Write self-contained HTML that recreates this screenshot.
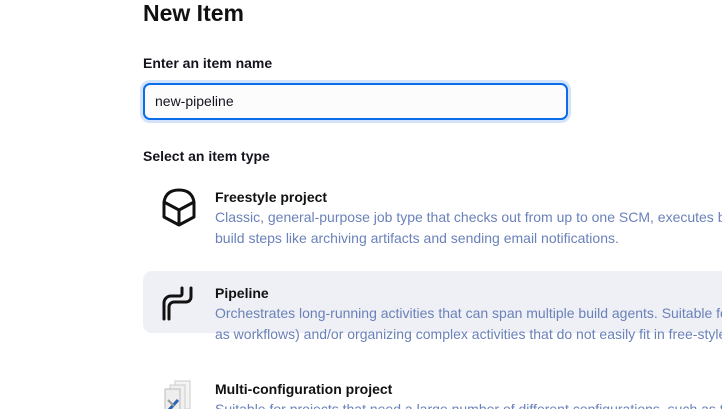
<!DOCTYPE html>
<html style="overflow:hidden"><head><style>
body{margin:0;width:722px;height:409px;overflow:hidden;background:#fff;font-family:"Liberation Sans",sans-serif;color:#14141f;position:relative}
.a{position:absolute;white-space:nowrap}
h1{position:absolute;left:143px;top:0px;margin:0;font-size:23px;font-weight:600;color:#111}
.lbl{font-size:14px;font-weight:600}
.input{position:absolute;left:143px;top:83px;height:33px;border:2px solid #0b6de8;border-radius:7px;background:#fcfcfd;box-shadow:0 0 0 3px #d3e3fa;font-size:14px;line-height:33px;padding-left:10px;box-sizing:content-box;width:411px}
.t{font-size:14px;font-weight:600;color:#111}
.d{font-size:14px;color:#6a81b9;line-height:21px}
.sel{position:absolute;left:143px;top:271px;width:579px;height:62px;background:#eef0f5;border-radius:9px 0 0 9px}
</style></head><body>
<h1>New Item</h1>
<div class="a lbl" style="left:143px;top:55px">Enter an item name</div>
<div class="input">new-pipeline</div>
<div class="a lbl" style="left:143px;top:148px">Select an item type</div>

<svg class="a" style="left:160px;top:187px" width="38" height="40" viewBox="0 0 38 40"><path d="M4 15 Q6 3 19 3 Q32 3 34 15 V30 L19 38 L4 30 Z M4 15 L19 23 L34 15 M19 23 V38" fill="none" stroke="#111" stroke-width="3" stroke-linejoin="round"/></svg>
<div class="a t" style="left:215px;top:189px">Freestyle project</div>
<div class="a d" style="left:215px;top:207px">Classic, general-purpose job type that checks out from up to one SCM, executes build steps serially<br>build steps like archiving artifacts and sending email notifications.</div>

<div class="sel"></div>
<svg class="a" style="left:162px;top:286px" width="34" height="36" viewBox="0 0 34 36"><path d="M29 2 V11 A5 5 0 0 1 24 16 H12 A5 5 0 0 0 7 21 V33 M20 2 V8 A2 2 0 0 1 18 10 H9 A7 7 0 0 0 2 17 V33" fill="none" stroke="#111" stroke-width="3" stroke-linecap="round"/></svg>
<div class="a t" style="left:215px;top:285px">Pipeline</div>
<div class="a d" style="left:215px;top:303px">Orchestrates long-running activities that can span multiple build agents. Suitable for building<br>as workflows) and/or organizing complex activities that do not easily fit in free-style job type.</div>

<svg class="a" style="left:162px;top:380px" width="32" height="31" viewBox="0 0 32 31"><rect x="13" y="1" width="15" height="28" fill="#f4f4f4" stroke="#ccc"/><rect x="8" y="5" width="15" height="28" fill="#f0f0f0" stroke="#ccc"/><rect x="3" y="9" width="15" height="28" fill="#eee" stroke="#bbb"/><path d="M6 31 L16 20" stroke="#2a63b8" stroke-width="3"/><path d="M6 20 L12 26" stroke="#999" stroke-width="2"/></svg>
<div class="a t" style="left:215px;top:381px">Multi-configuration project</div>
<div class="a d" style="left:215px;top:399px">Suitable for projects that need a large number of different configurations, such as testing</div>
</body></html>
